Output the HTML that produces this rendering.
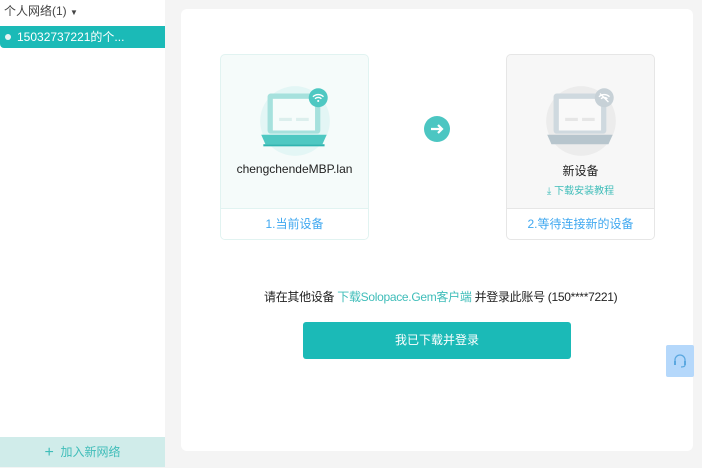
<!DOCTYPE html>
<html><head><meta charset="utf-8"><style>
*{margin:0;padding:0;box-sizing:border-box}
body{width:702px;height:467px;overflow:hidden;background:#f4f4f4;font-family:"Liberation Sans","Noto Sans CJK SC",sans-serif;position:relative}
.side{position:absolute;left:0;top:0;width:165px;height:467px;background:#fff}
.hd{position:absolute;left:4px;top:2px;font-size:12px;color:#444}
.item{position:absolute;left:0;top:26px;width:165px;height:22px;background:#1bbab7;border-radius:0 0 0 4px;color:#fff;font-size:12px;line-height:22px;padding-left:17px}
.item:before{content:"";position:absolute;left:5px;top:8px;width:6px;height:6px;border-radius:50%;background:#e9f3f3}
.add{position:absolute;left:0;top:437px;width:165px;height:30px;background:#d0ecea;color:#3fbdb9;font-size:12px;text-align:center;line-height:30px}
.card{position:absolute;left:181px;top:9px;width:512px;height:442px;background:#fff;border-radius:6px}
.dev{position:absolute;top:54px;width:149px;height:186px;border-radius:5px;border:1px solid #e1f3f1;background:#f5fbfa;overflow:hidden}
.dev .lb{position:absolute;left:0;bottom:0;width:100%;height:31px;background:#fff;border-top:1px solid #e1f3f1;text-align:center;line-height:30px;font-size:12px;color:#40a8f0}
.dev .nm{position:absolute;top:107px;width:100%;text-align:center;font-size:12px;color:#222}
.arrow{position:absolute;left:424px;top:116px;width:26px;height:26px;border-radius:50%;background:#4cc6c2}
.btn{position:absolute;left:303px;top:322px;width:268px;height:37px;background:#1bbab7;border-radius:3px;color:#fff;font-size:12px;text-align:center;line-height:37px}
.msg{position:absolute;left:264px;top:288px;white-space:nowrap;font-size:12px;color:#222;letter-spacing:-0.3px}
.help{position:absolute;left:666px;top:345px;width:28px;height:32px;background:#b5d8fb;border-radius:2px}
</style></head><body>
<div class="side">
<div class="hd">个人网络(1) <span style="font-size:8px">▼</span></div>
<div class="item">15032737221的个...</div>
<div class="add"><span style="font-size:16px;vertical-align:-1px">+</span>&nbsp; 加入新网络</div>
</div>
<div class="card"></div>
<div class="dev" style="left:220px">
<svg style="position:absolute;left:36px;top:28px" width="76" height="76" viewBox="0 0 72 72">
<circle cx="36" cy="36" r="33" fill="#e3f6f5"/>
<rect x="10" y="10" width="50" height="38" rx="3" fill="#a6e1dd"/>
<rect x="15" y="15" width="40" height="30" fill="#f6fcfb"/>
<rect x="21" y="33" width="12" height="3" fill="#dcefed"/><rect x="37" y="33" width="12" height="3" fill="#dcefed"/>
<path d="M4 49h62l-4 9H8z" fill="#4ec8c2"/><rect x="6" y="58" width="58" height="2" fill="#2fb5b0"/>
<circle cx="58" cy="14" r="9" fill="#4ec8c2"/>
<path d="M53 13a7 7 0 0 1 10 0M55 15a4 4 0 0 1 6 0" stroke="#fff" stroke-width="1.3" fill="none"/><circle cx="58" cy="17" r="1" fill="#fff"/>
</svg>
<div class="nm">chengchendeMBP.lan</div>
<div class="lb">1.当前设备</div>
</div>
<div class="arrow"><svg width="26" height="26"><path d="M7 13h11M14 9l4 4-4 4" stroke="#fff" stroke-width="2.2" fill="none"/></svg></div>
<div class="dev" style="left:506px;background:#f7f7f7;border-color:#e6e6e6">
<svg style="position:absolute;left:36px;top:28px" width="76" height="76" viewBox="0 0 72 72">
<circle cx="36" cy="36" r="33" fill="#ececec"/>
<rect x="10" y="10" width="50" height="38" rx="3" fill="#cfd9df"/>
<rect x="15" y="15" width="40" height="30" fill="#f9f9f9"/>
<rect x="21" y="33" width="12" height="3" fill="#e6e6e6"/><rect x="37" y="33" width="12" height="3" fill="#e6e6e6"/>
<path d="M4 49h62l-4 9H8z" fill="#b7c5cd"/>
<circle cx="58" cy="14" r="9" fill="#c7d1d7"/>
<path d="M53 13a7 7 0 0 1 10 0M55 15a4 4 0 0 1 6 0M54 10l8 8" stroke="#fff" stroke-width="1.3" fill="none"/>
</svg>
<div class="nm">新设备</div>
<div style="position:absolute;top:127px;width:100%;text-align:center;font-size:10px;color:#3fbdb9">⤓ 下载安装教程</div>
<div class="lb" style="border-color:#e6e6e6">2.等待连接新的设备</div>
</div>
<div class="msg">请在其他设备 <span style="color:#3fbdb9">下载Solopace.Gem客户端</span> 并登录此账号 (150****7221)</div>
<div class="btn">我已下载并登录</div>
<div class="help"><svg width="28" height="32"><path d="M9 18v-3a5 5 0 0 1 10 0v3" stroke="#5ba8e0" stroke-width="1.3" fill="none"/><rect x="8" y="16" width="2" height="4" fill="#5ba8e0"/><rect x="18" y="16" width="2" height="4" fill="#5ba8e0"/><path d="M19 20q0 2-4 2" stroke="#5ba8e0" stroke-width="1.2" fill="none"/></svg></div>
</body></html>
